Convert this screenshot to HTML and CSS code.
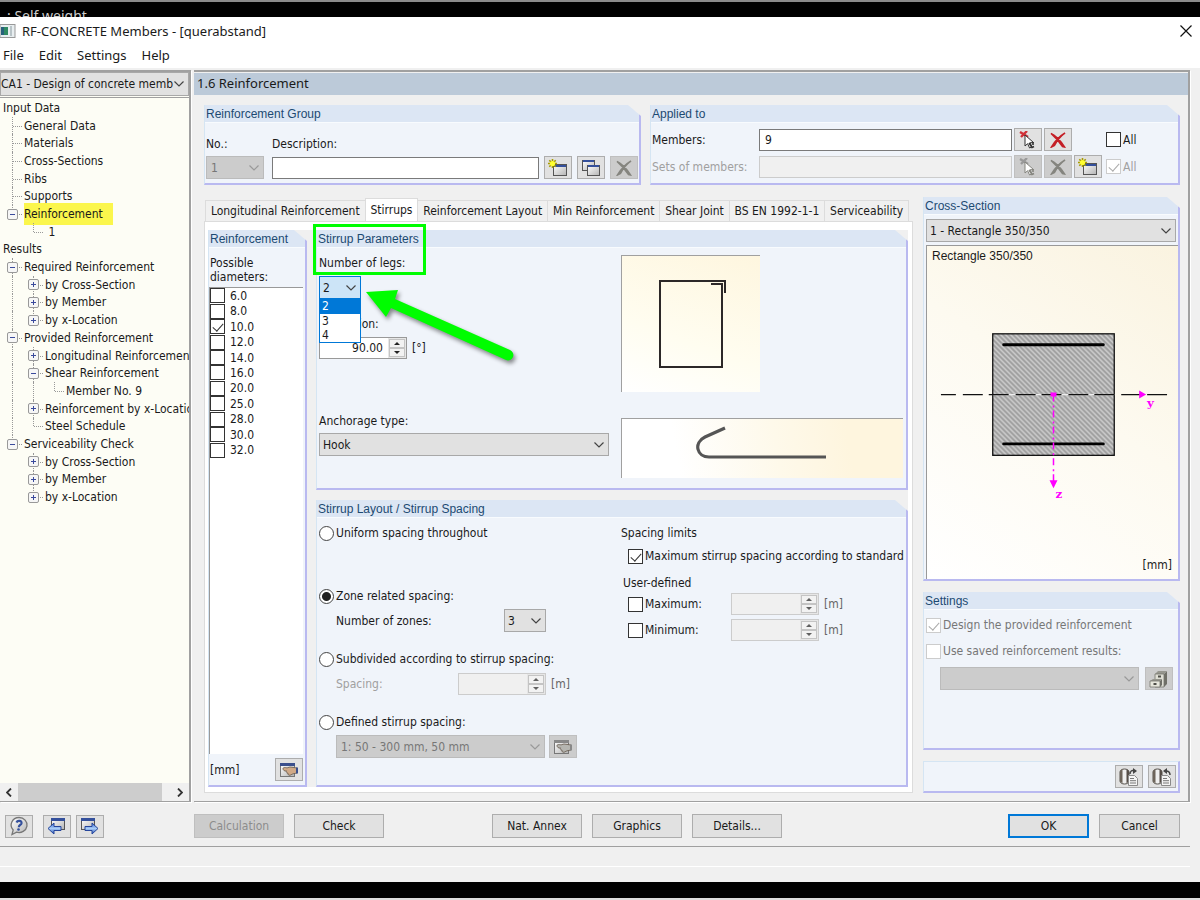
FILE: index.html
```html
<!DOCTYPE html>
<html lang="en">
<head>
<meta charset="utf-8">
<title>RF-CONCRETE Members - [querabstand]</title>
<link rel="stylesheet" href="styles.css">
</head>
<body>
<svg class="sprite" aria-hidden="true">
  <defs>
    <linearGradient id="gWin" x1="0" y1="0" x2="1" y2="1"><stop offset="0" stop-color="#fff"/><stop offset="1" stop-color="#b4b4b4"/></linearGradient>
    <linearGradient id="gBlue" x1="0" y1="0" x2="0" y2="1"><stop offset="0" stop-color="#3c6bd0"/><stop offset=".5" stop-color="#a8cdf8"/><stop offset="1" stop-color="#2c55b5"/></linearGradient>
    <pattern id="hatch" width="5" height="5" patternUnits="userSpaceOnUse"><rect width="5" height="5" fill="#9c9c9c"/><path d="M-1-1 6 6M-1 4 1 6M4-1 6 1" stroke="#d8d8d8" stroke-width="1.300"/></pattern>
  </defs>
  <symbol id="chev" viewBox="0 0 10 6"><path d="M.5.5 5 5 9.5.5" fill="none" stroke="currentColor" stroke-width="1.200"/></symbol>
  <symbol id="new" viewBox="0 0 20 18"><rect x="5.500" y="5.500" width="13" height="11" fill="url(#gWin)" stroke="#555"/><path d="M6 6h12v2H6z" fill="#34509c"/><path d="M4.500 0v9M0 4.500h9M1.300 1.300l6.400 6.400M7.700 1.300 1.300 7.700" stroke="#a89c00" stroke-width="1.600"/><circle cx="4.500" cy="4.500" r="2.600" fill="#ffff30"/></symbol>
  <symbol id="copy" viewBox="0 0 20 18"><rect x="1.500" y="1.500" width="12" height="10" fill="url(#gWin)" stroke="#555"/><path d="M2 1h11v2H2z" fill="#34509c"/><rect x="6.500" y="6.500" width="12" height="10" fill="url(#gWin)" stroke="#555"/><path d="M7 6h11v2H7z" fill="#34509c"/></symbol>
  <symbol id="del" viewBox="0 0 16 16"><path d="M1 1.500C5 3 11 9 14.500 15L12.500 14.500C9 9.500 5 5 1 1.500zM15 1C10 4 5 9 1.500 15L4.500 13.500C7 8.500 11 4 15 1z" fill="currentColor" stroke="currentColor" stroke-width="1.500"/></symbol>
  <symbol id="pick" viewBox="0 0 18 18"><path d="M1 1l8 5M8 0 2 6" stroke="var(--x)" stroke-width="2.400"/><path d="M6 4v11l2.600-2.300 2 4.300 2.400-1.200-2-4 3.500-.3z" fill="#fff" stroke="currentColor"/><path d="M10 12l3 4.500 2-1M14 11v3" fill="none" stroke="currentColor" stroke-width="1.600"/></symbol>
  <symbol id="hand" viewBox="0 0 20 18"><rect x="1.500" y="2.500" width="14" height="13" fill="url(#gWin)" stroke="#777"/><path d="M1 2h15v3H1z" fill="var(--bar)"/><path d="M4 7.500c0-1 2-1.200 4-.6l3-.9 7 1v5l-4 .8-3 1.500c-2 0-2-1-1.500-1.500-1.500 0-1.800-.8-1.300-1.400-1 0-1.200-1-.6-1.500-2 .4-3.600-.4-3.600-2.400z" fill="var(--skin)" stroke="#66594c" stroke-width=".8"/><path d="M17 6.500h2v6h-2z" fill="var(--bar)"/></symbol>
  <symbol id="help" viewBox="0 0 20 20"><path d="M10 1.500a8 7.500 0 1 1-2.500 14.600L3 18.500 4.200 14A8 7.500 0 0 1 10 1.500z" fill="url(#gWin)" stroke="#777" stroke-width="1.300"/><path d="M7.500 6.500c1-2.500 5.500-2 5 .7-.4 1.800-2.700 1.800-2.700 4" fill="none" stroke="#34509c" stroke-width="2.200"/><circle cx="9.500" cy="13.500" r="1.300" fill="#34509c"/></symbol>
  <symbol id="prev" viewBox="0 0 20 18"><rect x="4.500" y="1.500" width="13" height="11" fill="url(#gWin)" stroke="#555"/><path d="M4 1h14v3H4z" fill="#34509c"/><path d="M1 11.500 7 6v3.500h7v4H7V17z" fill="url(#gBlue)" stroke="#25459b"/></symbol>
  <symbol id="next" viewBox="0 0 20 18"><rect x="1.500" y="1.500" width="13" height="11" fill="url(#gWin)" stroke="#555"/><path d="M1 1h14v3H1z" fill="#34509c"/><path d="M18 11.500 12 6v3.500H5v4h7V17z" fill="url(#gBlue)" stroke="#25459b"/></symbol>
  <symbol id="cab" viewBox="0 0 20 18"><path d="M15 4l3-3v13l-3 3z" fill="#6f6f67"/><path d="M6 4l3-3h9l-3 3z" fill="#96968e"/><path d="M6 4h9v13H6z" fill="#deded4" stroke="#77776f" stroke-width=".8"/><path d="M1 11l3-2h9l-2 2z" fill="#96968e"/><path d="M1 11h10v6H1z" fill="#e6e6dc" stroke="#77776f" stroke-width=".8"/><path d="M11 11l2-2v6l-2 2z" fill="#6f6f67"/><path d="M9 6.500h3M4.500 14h3" stroke="#4e4e48" stroke-width="2"/></symbol>
  <symbol id="db" viewBox="0 0 20 18"><path d="M1 4c0-4 9-4 9 0v9c0 4-9 4-9 0z" fill="#efefef" stroke="#54504b"/><path d="M1 4c0-1.500 1-2.400 2.500-2.800v13.900C2 14.800 1 14 1 13z" fill="#6d645a"/><path d="M7.500 1.200C9 1.600 10 2.500 10 4v9c0 1-1 1.800-2.500 2.100z" fill="#554d47"/><path d="M9.500 7.500h6l3 3v7h-9z" fill="#f4f4f4" stroke="#8a8a8a"/><path d="M11 10.500h4M11 12.700h6M11 15h6" stroke="#777"/></symbol>
</svg>

<div class="backdrop"><span>: Self weight</span></div>

<div class="window">
  <header class="titlebar">
    <svg class="appicon" width="16" height="14" viewBox="0 0 16 14"><rect x="0" y=".5" width="15" height="13" fill="#e8eef0" stroke="#999"/><rect x="1" y="3" width="7" height="8" fill="#2f8a63"/><path d="M1 3h3v8H1z" fill="#28617c"/><path d="M11 2v10" stroke="#b9c4c8" stroke-width="2"/></svg>
    <h1>RF-CONCRETE Members - [querabstand]</h1>
    <button class="close" aria-label="Close"><svg width="12" height="12" viewBox="0 0 12 12"><path d="M.5.5l11 11M11.500.5l-11 11" stroke="#111" stroke-width="1.200"/></svg></button>
  </header>
  <nav class="menu"><button>File</button><button>Edit</button><button>Settings</button><button>Help</button></nav>

  <main class="work">
    <aside class="navigator">
      <span class="combo case"><select aria-label="Design case"><option>CA1 - Design of concrete memb</option></select><svg class="chev"><use href="#chev"/></svg></span>
      <ul class="tree">
        <li>Input Data</li>
        <li><i class="tee"></i>General Data</li>
        <li><i class="tee"></i>Materials</li>
        <li><i class="tee"></i>Cross-Sections</li>
        <li><i class="tee"></i>Ribs</li>
        <li><i class="tee"></i>Supports</li>
        <li><i class="end"><button class="minus" aria-label="Collapse"></button></i><mark>Reinforcement</mark></li>
        <li><i></i><i class="end"></i>&nbsp;1</li>
        <li>Results</li>
        <li><i class="tee"><button class="minus" aria-label="Collapse"></button></i>Required Reinforcement</li>
        <li><i class="bar"></i><i class="tee"><button class="plus" aria-label="Expand"></button></i>by Cross-Section</li>
        <li><i class="bar"></i><i class="tee"><button class="plus" aria-label="Expand"></button></i>by Member</li>
        <li><i class="bar"></i><i class="end"><button class="plus" aria-label="Expand"></button></i>by x-Location</li>
        <li><i class="tee"><button class="minus" aria-label="Collapse"></button></i>Provided Reinforcement</li>
        <li><i class="bar"></i><i class="tee"><button class="plus" aria-label="Expand"></button></i>Longitudinal Reinforcement</li>
        <li><i class="bar"></i><i class="tee"><button class="minus" aria-label="Collapse"></button></i>Shear Reinforcement</li>
        <li><i class="bar"></i><i class="bar"></i><i class="end"></i>Member No. 9</li>
        <li><i class="bar"></i><i class="tee"><button class="plus" aria-label="Expand"></button></i>Reinforcement by x-Location</li>
        <li><i class="bar"></i><i class="end"></i>Steel Schedule</li>
        <li><i class="end"><button class="minus" aria-label="Collapse"></button></i>Serviceability Check</li>
        <li><i></i><i class="tee"><button class="plus" aria-label="Expand"></button></i>by Cross-Section</li>
        <li><i></i><i class="tee"><button class="plus" aria-label="Expand"></button></i>by Member</li>
        <li><i></i><i class="end"><button class="plus" aria-label="Expand"></button></i>by x-Location</li>
      </ul>
      <div class="hscroll">
        <button aria-label="Scroll left"><svg width="6" height="9" viewBox="0 0 6 9"><path d="M5 .5 1 4.500l4 4" fill="none" stroke="#333" stroke-width="1.800"/></svg></button>
        <div class="track"><div class="thumb"></div></div>
        <button aria-label="Scroll right"><svg width="6" height="9" viewBox="0 0 6 9"><path d="M1 .5l4 4-4 4" fill="none" stroke="#333" stroke-width="1.800"/></svg></button>
      </div>
    </aside>

    <section class="editor">
      <h2 class="bar-title">1.6 Reinforcement</h2>
      <div class="content">
        <div class="top">
          <section class="group">
            <h3>Reinforcement Group</h3>
            <div class="rgroup">
              <label for="no">No.:</label><label for="desc" class="wide">Description:</label>
              <span class="combo off"><select id="no" disabled><option>1</option></select><svg class="chev"><use href="#chev"/></svg></span>
              <input id="desc" class="text" type="text">
              <button class="ib" aria-label="New"><svg width="20" height="18"><use href="#new"/></svg></button>
              <button class="ib" aria-label="Copy"><svg width="20" height="18"><use href="#copy"/></svg></button>
              <button class="ib off" aria-label="Delete" disabled><svg width="16" height="16"><use href="#del"/></svg></button>
            </div>
          </section>
          <section class="group">
            <h3>Applied to</h3>
            <div class="applied">
              <label for="mem">Members:</label>
              <input id="mem" class="text" type="text" value="9">
              <button class="ib" aria-label="Pick members"><svg class="red" width="18" height="18"><use href="#pick"/></svg></button>
              <button class="ib del" aria-label="Clear members"><svg width="16" height="16"><use href="#del"/></svg></button>
              <span></span>
              <label class="check"><input type="checkbox">All</label>
              <label for="sets" class="dim">Sets of members:</label>
              <input id="sets" class="text" type="text" disabled>
              <button class="ib off" aria-label="Pick sets" disabled><svg width="18" height="18"><use href="#pick"/></svg></button>
              <button class="ib off" aria-label="Clear sets" disabled><svg width="16" height="16"><use href="#del"/></svg></button>
              <button class="ib" aria-label="New set"><svg width="20" height="18"><use href="#new"/></svg></button>
              <label class="check dim"><input type="checkbox" checked disabled>All</label>
            </div>
          </section>
        </div>

        <div class="bottom">
          <div class="tabs">
            <div class="tablist" role="tablist">
              <button role="tab">Longitudinal Reinforcement</button><button role="tab" class="active" aria-selected="true">Stirrups</button><button role="tab">Reinforcement Layout</button><button role="tab">Min Reinforcement</button><button role="tab">Shear Joint</button><button role="tab">BS EN 1992-1-1</button><button role="tab">Serviceability</button>
            </div>
            <div class="page">
              <section class="group">
                <h3>Reinforcement</h3>
                <div class="diam">
                  <p>Possible<br>diameters:</p>
                  <div class="list">
                    <div class="rows">
                      <label class="check"><input type="checkbox">6.0</label>
                      <label class="check"><input type="checkbox">8.0</label>
                      <label class="check"><input type="checkbox" checked>10.0</label>
                      <label class="check"><input type="checkbox">12.0</label>
                      <label class="check"><input type="checkbox">14.0</label>
                      <label class="check"><input type="checkbox">16.0</label>
                      <label class="check"><input type="checkbox">20.0</label>
                      <label class="check"><input type="checkbox">25.0</label>
                      <label class="check"><input type="checkbox">28.0</label>
                      <label class="check"><input type="checkbox">30.0</label>
                      <label class="check"><input type="checkbox">32.0</label>
                    </div>
                  </div>
                  <div class="unitrow"><span>[mm]</span><button class="ib" aria-label="Edit diameters"><svg width="20" height="18"><use href="#hand"/></svg></button></div>
                </div>
              </section>
              <div class="stack">
                <section class="group">
                  <h3>Stirrup Parameters</h3>
                  <div class="params">
                    <div class="fields">
                      <label for="legs">Number of legs:</label>
                      <div class="legs">
                        <span class="combo open"><select id="legs"><option>2</option><option>3</option><option>4</option></select><svg class="chev"><use href="#chev"/></svg></span>
                        <ul class="droplist"><li class="sel">2</li><li>3</li><li>4</li></ul>
                      </div>
                      <label for="incl">Inclination:</label>
                      <div class="line"><span class="spin"><input id="incl" type="text" value="90.00"><span class="arrows"><button aria-label="Up"></button><button aria-label="Down"></button></span></span><span>[°]</span></div>
                    </div>
                    <div class="pic square"><svg width="136" height="134" viewBox="0 0 136 134"><path d="M89 28h12M100 27v84H38V25h65v12" fill="none" stroke="#2c2828" stroke-width="2"/></svg></div>
                    <div class="anch">
                      <label for="anch">Anchorage type:</label>
                      <span class="combo"><select id="anch"><option>Hook</option></select><svg class="chev"><use href="#chev"/></svg></span>
                    </div>
                    <div class="pic hook"><svg width="280" height="58" viewBox="0 0 280 58"><path d="M103 9 83 18C71 24 75 38 87 38h117" fill="none" stroke="#555" stroke-width="3.200"/></svg></div>
                  </div>
                  <div class="frame"></div>
                  <svg class="arrow" width="160" height="84" viewBox="0 0 160 84"><path d="M6 7 38 5l-3 9 115 51a5 5 0 0 1-4 10L31 23l-5 9z" fill="#00fd00"/></svg>
                </section>
                <section class="group">
                  <h3>Stirrup Layout / Stirrup Spacing</h3>
                  <div class="layout">
                    <div class="modes">
                      <div><label class="check"><input type="radio" name="m">Uniform spacing throughout</label></div>
                      <div><label class="check"><input type="radio" name="m" checked>Zone related spacing:</label>
                        <div class="sub"><label for="zones">Number of zones:</label><span class="combo short"><select id="zones"><option>3</option></select><svg class="chev"><use href="#chev"/></svg></span></div></div>
                      <div><label class="check"><input type="radio" name="m">Subdivided according to stirrup spacing:</label>
                        <div class="sub"><label for="spc" class="dim">Spacing:</label><span class="spin off"><input id="spc" type="text" disabled><span class="arrows"><button aria-label="Up" disabled></button><button aria-label="Down" disabled></button></span></span><span class="unit">[m]</span></div></div>
                      <div><label class="check"><input type="radio" name="m">Defined stirrup spacing:</label>
                        <div class="sub"><span class="combo off def"><select aria-label="Defined spacing" disabled><option>1: 50 - 300 mm, 50 mm</option></select><svg class="chev"><use href="#chev"/></svg></span><button class="ib off" aria-label="Edit spacing" disabled><svg width="20" height="18"><use href="#hand"/></svg></button></div></div>
                    </div>
                    <div class="limits">
                      <p>Spacing limits</p>
                      <label class="check in"><input type="checkbox" checked>Maximum stirrup spacing according to standard</label>
                      <p class="ud">User-defined</p>
                      <div class="lim"><label class="check"><input type="checkbox">Maximum:</label><span class="spin off"><input type="text" aria-label="Maximum" disabled><span class="arrows"><button aria-label="Up" disabled></button><button aria-label="Down" disabled></button></span></span><span class="unit">[m]</span></div>
                      <div class="lim"><label class="check"><input type="checkbox">Minimum:</label><span class="spin off"><input type="text" aria-label="Minimum" disabled><span class="arrows"><button aria-label="Up" disabled></button><button aria-label="Down" disabled></button></span></span><span class="unit">[m]</span></div>
                    </div>
                  </div>
                </section>
              </div>
            </div>
          </div>

          <div class="side">
            <section class="group grow">
              <h3>Cross-Section</h3>
              <div class="cross">
                <span class="combo"><select aria-label="Cross-section"><option>1 - Rectangle 350/350</option></select><svg class="chev"><use href="#chev"/></svg></span>
                <div class="view">
                  <span class="name">Rectangle 350/350</span>
                  <svg viewBox="926 246 252 334">
                    <rect x="992" y="334" width="122" height="122" fill="url(#hatch)" stroke="#111" stroke-width="1.300"/>
                    <path d="M1003 345h100M1003 444.500h100" stroke="#000" stroke-width="3" stroke-linecap="round"/>
                    <path d="M992 395h122" stroke="#eee" stroke-width="1.300"/>
                    <path d="M940 395h15M962 395h20M988 395h20M1015 395h20M1041 395h20M1068 395h20M1094 395h20M1121 395h20M1147 395h20" stroke="#111" stroke-width="1.300"/>
                    <path d="M1053 395v88" stroke="#f0f" stroke-width="1.500" stroke-dasharray="7 4 2 3"/>
                    <path d="M1050 393h6v4h-6zM1139 391l7 4-7 4zM1049 481h8l-4 8z" fill="#f0f"/>
                    <text class="axis" x="1147" y="407">y</text><text class="axis" x="1055" y="499">z</text>
                  </svg>
                  <span class="mm">[mm]</span>
                </div>
              </div>
            </section>
            <section class="group">
              <h3>Settings</h3>
              <div class="settings">
                <label class="check grey"><input type="checkbox" checked disabled>Design the provided reinforcement</label>
                <label class="check grey"><input type="checkbox" disabled>Use saved reinforcement results:</label>
                <div class="saved"><span class="combo off"><select aria-label="Saved results" disabled><option></option></select><svg class="chev"><use href="#chev"/></svg></span><button class="ib off" aria-label="Manage saved results" disabled><svg width="20" height="18"><use href="#cab"/></svg></button></div>
              </div>
            </section>
            <section class="group flat">
              <div class="tools">
                <button class="ib" aria-label="Load from library"><svg width="20" height="18"><use href="#db"/><path d="M11 6c0-3 2-4 4-3" fill="none" stroke="#444" stroke-width="1.500"/><path d="M14 0l4 3-4 3z" fill="#444"/></svg></button>
                <button class="ib" aria-label="Save to library"><svg width="20" height="18"><use href="#db"/><path d="M18 7c0-3-2-4-4-4" fill="none" stroke="#444" stroke-width="1.500"/><path d="M15 0l-4 3 4 3z" fill="#444"/></svg></button>
              </div>
            </section>
          </div>
        </div>
      </div>
    </section>
  </main>

  <footer class="actions">
    <div class="nav">
      <button class="ib" aria-label="Help"><svg width="20" height="20"><use href="#help"/></svg></button>
      <button class="ib" aria-label="Previous"><svg width="20" height="18"><use href="#prev"/></svg></button>
      <button class="ib" aria-label="Next"><svg width="20" height="18"><use href="#next"/></svg></button>
    </div>
    <div class="set"><button class="btn" disabled>Calculation</button><button class="btn">Check</button></div>
    <div class="set mid"><button class="btn">Nat. Annex</button><button class="btn">Graphics</button><button class="btn">Details...</button></div>
    <div class="set ends"><button class="btn ok">OK</button><button class="btn">Cancel</button></div>
  </footer>
  <div class="status"></div>
</div>
</body>
</html>
```
FILE: styles.css
```css
* { box-sizing: border-box; }
body { margin: 0; min-height: 100vh; display: flex; flex-direction: column; background: #000; border-top: 2px solid #8a8a8a; border-bottom: 2px solid #ddd;
  font: 12px/16px "DejaVu Sans Condensed", "DejaVu Sans", sans-serif; color: #1a1a1a; }
button, input, select { font: inherit; color: inherit; margin: 0; padding: 0; border-radius: 0; }
h1, h2, h3, p, ul { margin: 0; padding: 0; font-weight: normal; list-style: none; }
button { background: none; border: 0; }
.sprite { position: absolute; width: 0; height: 0; }

.backdrop { height: 15px; overflow: hidden; color: #ccc; font: 14px/16px "Noto Sans", sans-serif; padding: 6px 0 0 7px; }
.window { flex: 1; display: flex; flex-direction: column; background: #f0f0f0; margin-bottom: 16px; min-width: 0; }
.titlebar { display: flex; align-items: center; gap: 6px; height: 28px; background: #fff; padding-right: 8px; }
.titlebar h1 { flex: 1; font: 13px/18px "Noto Sans", sans-serif; }
.close { width: 12px; height: 12px; }
.close svg, .ib svg { display: block; }
.menu { display: flex; align-items: flex-start; gap: 15px; height: 23px; padding-left: 3px; background: #fff; font: 13px/20px "Noto Sans", sans-serif; }

.work { flex: 1; display: grid; grid-template-columns: 191px minmax(0, 1fr); gap: 3px; padding: 2px 10px 0 0; }
.navigator { display: flex; flex-direction: column; min-width: 0; border: solid #a0a0a0; border-width: 2px 2px 1px 0; background: #fdfdf5; box-shadow: 1px 1px #fff; }
.editor { display: flex; flex-direction: column; min-width: 0; border: solid #a0a0a0; border-width: 2px 2px 1px 0; box-shadow: 1px 1px #fff; }
.bar-title { background: #bccad9; font: 13px/20px "Noto Sans", sans-serif; padding-left: 3px; height: 22px; margin-top: 1px; }

.combo { position: relative; display: flex; height: 23px; border: 1px solid #a8a8a8; background: #e1e1e1; }
.combo select { appearance: none; flex: 1; min-width: 0; width: 100%; border: 0; background: transparent; padding-left: 3px; opacity: 1; }
.chev { position: absolute; right: 4px; top: 8px; width: 10px; height: 6px; color: #444; pointer-events: none; }
.combo.off { background: #ccc; border-color: #bbb; color: #777; }
.combo.off select { padding-left: 4px; }
.combo.off .chev { color: #999; }
.combo.case { height: 24px; margin: 0 0 1px; }
.combo.case select { padding-left: 0; }

.tree { flex: 1; display: grid; grid-template-rows: repeat(23, 1fr); max-height: 409px; overflow: hidden; border-top: 1px solid #a0a0a0; padding: 1px 0 0 3px; white-space: nowrap; margin-bottom: auto; }
.tree li { display: flex; align-items: center; min-height: 0; overflow: hidden; line-height: 16px; }
.tree i { position: relative; flex: none; width: 21px; align-self: stretch; display: flex; align-items: center; }
.tree .bar::before, .tree .tee::before, .tree .end::before { content: ""; position: absolute; left: 9px; top: 0; bottom: 0; border-left: 1px dotted #999; }
.tree .end::before { bottom: 50%; }
.tree .tee::after, .tree .end::after { content: ""; position: absolute; left: 10px; right: 2px; top: 50%; border-top: 1px dotted #999; }
.tree mark { background: #fbf64c; color: inherit; padding: 3px 10px 3px 0; }
.tree li:has(mark) { overflow: visible; }
.plus, .minus { position: relative; z-index: 1; width: 11px; height: 11px; margin-left: 4px; border: 1px solid #999; border-radius: 2px;
  background: linear-gradient(#3a4a9c, #3a4a9c) center / 5px 1px no-repeat, #f6f6f6; }
.plus { background: linear-gradient(#3a4a9c, #3a4a9c) center / 5px 1px no-repeat, linear-gradient(#3a4a9c, #3a4a9c) center / 1px 5px no-repeat, #f6f6f6; }
.hscroll { display: flex; height: 18px; background: #f0f0f0; }
.hscroll button { width: 18px; display: grid; place-items: center; }
.track { flex: 1; display: flex; }
.thumb { width: 94%; background: #cdcdcd; }

.content { flex: 1; display: flex; flex-direction: column; gap: 12px; padding: 10px 8px 8px 10px; }
.top { display: grid; grid-template-columns: 437fr 530fr; gap: 9px; }
.group { position: relative; display: flex; flex-direction: column; min-width: 0; background: #f0f4fa; border: solid #b9b9f0; border-width: 0 2px 2px 1px; border-left-color: #d5e5f3; }
.group::after { content: ""; position: absolute; top: 0; right: -2px; width: 13px; height: 11px; background: #f0f0f0; clip-path: polygon(0 0, 100% 0, 100% 100%); }
.group.flat::after { display: none; }
.group h3 { font: 12px/18px "Liberation Sans", Arial, sans-serif; color: #1c4a72; background: #dce6f4; height: 18px; padding-left: 1px; border-bottom: 1px solid #f8fbfe; }
.group.flat { border-top: 1px solid #d5e5f3; }

.rgroup { display: grid; grid-template-columns: 58px minmax(0, 1fr) 28px 28px 28px; column-gap: 5px; row-gap: 4px; padding: 13px 1px 4px 1px; align-items: center; }
.rgroup .wide { grid-column: 2 / -1; padding-left: 3px; }
.rgroup .text { margin-left: 3px; }
.text { height: 22px; width: auto; min-width: 0; border: 1px solid #7a7a7a; background: #fff; padding: 0 5px; }
.text:disabled { background: #f0f0f0; border-color: #ccc; }
.ib { width: 28px; height: 23px; display: grid; place-items: center; border: 1px solid #adadad; background: #e1e1e1; color: #333; flex: none; --x: #888; --bar: #3a4f8c; --skin: #d0a987; }
.ib.off { background: #ccc; border-color: #bfbfbf; color: #85857f; --x: #999; --bar: #888; --skin: #b5b5b0; }
.ib.del { color: #c41f26; }
.ib .red { --x: #d03038; }
.applied { display: grid; grid-template-columns: 105px minmax(0, 1fr) 28px 28px 28px 64px; column-gap: 2px; row-gap: 4px; padding: 5px 10px 5px 1px; align-items: center; }
.applied .check { padding-left: 2px; }

.check { display: flex; align-items: center; gap: 2px; white-space: nowrap; }
.check input { appearance: none; flex: none; width: 15px; height: 15px; border: 1px solid #333; background: #fff; }
.check input[type=radio] { border-radius: 50%; border-color: #444; }
.check input[type=radio]:checked { background: radial-gradient(circle, #222 4px, #fff 5px); }
.check input[type=checkbox]:checked { position: relative; }
.check input[type=checkbox]:checked::after { content: ""; position: absolute; left: 4px; top: 1px; width: 5px; height: 9px; border: solid #333; border-width: 0 1px 1px 0; transform: rotate(42deg); }
.check input:disabled { border-color: #ccc; }
.check input[type=checkbox]:disabled::after { border-color: #aaa; }
.dim { color: #a0a0a0; }
.grey { color: #777; }

.bottom { flex: 1; display: grid; grid-template-columns: 709fr 257fr; gap: 10px; }
.tabs { display: flex; flex-direction: column; min-width: 0; }
.tablist { display: flex; align-items: flex-end; height: 24px; padding: 0 5px 0 1px; }
.tablist button { flex: auto; height: 21px; border: 1px solid #dcdcdc; border-bottom: 0; margin-right: -1px; white-space: nowrap; background: #f0f0f0; }
.tablist .active { height: 24px; background: #fff; margin-bottom: -1px; padding-bottom: 2px; }
.page { flex: 1; display: grid; grid-template-columns: 99px minmax(0, 1fr); gap: 9px; border: 1px solid #dcdcdc; padding: 8px 4px 5px 3px;
  background: #f0f0f0; box-shadow: inset 0 8px #fff, inset 3px 0 #fff, inset -4px 0 #fff, inset 0 -5px #fff; }
.stack { display: grid; grid-template-rows: 260px 1fr; gap: 10px; min-width: 0; }
.diam { flex: 1; display: flex; flex-direction: column; }
.diam p { line-height: 14px; padding: 8px 0 3px 1px; }
.list { flex: 1; background: #fff; border: solid #999; border-width: 1px 0 0 1px; margin-right: 2px; }
.rows { display: grid; grid-template-rows: repeat(11, 1fr); height: 170px; }
.rows .check { min-height: 0; gap: 5px; }
.unitrow { display: flex; justify-content: space-between; align-items: center; height: 31px; padding: 0 2px 0 1px; }

.params { flex: 1; display: grid; grid-template-columns: 302px minmax(0, 1fr); grid-template-rows: 163px 1fr; padding: 7px 3px 0 2px; }
.fields, .anch { display: flex; flex-direction: column; align-items: flex-start; }
.legs { position: relative; margin: 5px 0 17px; width: 42px; }
.combo.open { background: #cce4f7; border-color: #0078d7; }
.droplist { position: absolute; left: 0; top: 23px; z-index: 2; width: 42px; background: #fff; border: 1px solid #0078d7; border-top: 0; line-height: 14px; }
.droplist li { padding-left: 2px; height: 14px; }
.droplist .sel { background: #0078d7; color: #fff; height: 15px; line-height: 15px; }
.line { display: flex; align-items: center; gap: 5px; margin-top: 5px; }
.spin { display: flex; width: 88px; height: 22px; border: 1px solid #999; background: #fff; }
.spin input { flex: 1; min-width: 0; width: 0; border: 0; background: none; text-align: right; padding-right: 5px; }
.arrows { display: flex; flex-direction: column; width: 18px; padding: 1px; background: #e6e6e6; }
.arrows button { flex: 1; display: grid; place-items: center; border: 1px solid #c4c4c4; background: #f2f2f2; }
.arrows button::before { content: ""; border: 3px solid transparent; border-top-width: 0; border-bottom-color: #222; }
.arrows button:last-child::before { border-width: 3px 3px 0; border-color: #222 transparent transparent; }
.spin.off { background: #f0f0f0; border-color: #ccc; }
.spin.off button::before { opacity: .7; }
.unit { color: #666; }
.pic { border: solid #a0a0a0; border-width: 1px 0 0 1px; overflow: hidden; }
.pic svg { display: block; }
.square { width: 139px; height: 137px; background: linear-gradient(200deg, #fef6df, #fffdf0 60%, #fff); }
.hook { height: 60px; background: linear-gradient(80deg, #fff 20%, #fef9ea 55%, #fef5de 80%); }
.anch { margin-top: -5px; }
.anch .combo { width: 290px; margin-top: 4px; }
.frame { position: absolute; left: -4px; top: -6px; width: 113px; height: 51px; border: 3px solid #00fd00; z-index: 3; }
.arrow { position: absolute; left: 43px; top: 55px; z-index: 3; filter: drop-shadow(2px 3px 2px rgba(0,0,0,.45)); }

.layout { display: grid; grid-template-columns: 302px minmax(0, 1fr); padding: 7px 2px 0; }
.modes { display: grid; grid-template-rows: repeat(4, 63px); }
.sub { display: flex; align-items: center; width: 210px; height: 23px; margin: 5px 0 0 17px; }
.sub > label { flex: 1; }
.sub .unit { width: 0; overflow: visible; padding-left: 5px; }
.sub:has(.unit) { width: 215px; }
.sub:has(.def) { width: 241px; gap: 4px; }
.short { width: 42px; }
.def { flex: 1; }
.limits .in { margin: 7px 0 4px 7px; }
.limits .ud { margin-left: 2px; padding-top: 7px; }
.lim { display: flex; align-items: center; gap: 5px; padding-left: 7px; height: 26px; }
.lim .check { width: 98px; }

.side { display: flex; flex-direction: column; gap: 11px; min-width: 0; }
.grow { flex: 1; }
.cross { flex: 1; display: flex; flex-direction: column; gap: 3px; padding: 4px 0 0 2px; }
.cross .combo { margin-right: 2px; }
.view { flex: 1; display: grid; min-height: 0; border: solid #999; border-width: 1px 0 0 1px; background: linear-gradient(35deg, #fff, #fdfaf0 55%, #faf3e0); font-family: "Liberation Sans", Arial, sans-serif; }
.view > * { grid-area: 1 / 1; }
.view svg { width: 100%; height: 100%; }
.name { padding: 2px 5px; }
.mm { place-self: end; padding: 0 6px 6px 0; font-family: "DejaVu Sans Condensed", sans-serif; }
.axis { font: bold 12px "DejaVu Serif", serif; fill: #f0f; }
.settings { display: flex; flex-direction: column; gap: 10px; height: 138px; padding: 7px 5px 0 2px; }
.saved { display: flex; gap: 6px; padding-left: 14px; margin-top: -2px; }
.saved .combo { flex: 1; }
.tools { display: flex; justify-content: flex-end; gap: 5px; padding: 3px 2px; }

.actions { display: flex; align-items: center; padding: 12px 20px 8px 5px; }
.nav { display: flex; gap: 5px; width: 189px; }
.nav .ib:first-child { margin-right: 5px; }
.set { display: flex; gap: 10px; }
.mid { margin-left: 108px; }
.ends { margin-left: auto; }
.btn { width: 90px; height: 24px; border: 1px solid #adadad; background: #e1e1e1; }
.btn:disabled { background: #ccc; border-color: #bfbfbf; color: #8c8c8c; }
.ends .btn { width: 81px; }
.btn.ok { border: 2px solid #0078d7; }
.status { height: 21px; margin: 0 10px 15px 0; border-top: 1px solid #a0a0a0; border-bottom: 1px solid #fff; }
```
